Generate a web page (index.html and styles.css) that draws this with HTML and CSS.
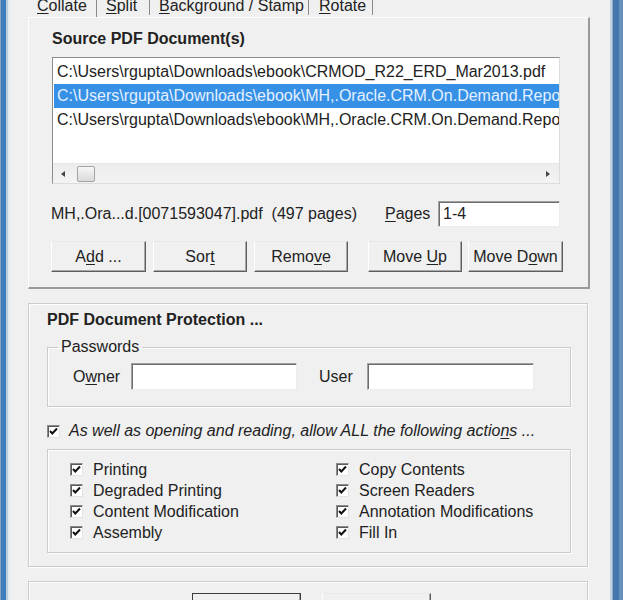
FILE: index.html
```html
<!DOCTYPE html>
<html lang="en">
<head>
    <meta charset="UTF-8">
    <title>PDF Tools - Collate</title>
    <link rel="stylesheet" href="styles.css">
</head>
<body>
    <div class="window">
        <div class="frame frame-left"></div>
        <div class="client">
            <!-- Abas -->
            <div class="tabs">
                <div class="tab tab-active"><u>C</u>ollate</div>
                <div class="tab"><u>S</u>plit</div>
                <div class="tab"><u>B</u>ackground / Stamp</div>
                <div class="tab"><u>R</u>otate</div>
            </div>

            <div class="tab-panel">
                <div class="heading">Source PDF Document(s)</div>
                <div class="listbox">
                    <div class="list-rows">
                        <div class="list-item">C:\Users\rgupta\Downloads\ebook\CRMOD_R22_ERD_Mar2013.pdf</div>
                        <div class="list-item selected">C:\Users\rgupta\Downloads\ebook\MH,.Oracle.CRM.On.Demand.Repo</div>
                        <div class="list-item">C:\Users\rgupta\Downloads\ebook\MH,.Oracle.CRM.On.Demand.Repo</div>
                    </div>
                    <div class="hscroll">
                        <span class="arrow arrow-left"></span>
                        <div class="track"><span class="thumb"></span></div>
                        <span class="arrow arrow-right"></span>
                    </div>
                </div>

                <div class="info-row">
                    <span class="file-info">MH,.Ora...d.[0071593047].pdf&nbsp; (497 pages)</span>
                    <label class="pages-label" for="pages"><u>P</u>ages</label>
                    <input class="text-field pages-field" id="pages" type="text" value="1-4">
                </div>

                <div class="button-row">
                    <button class="btn btn-add">A<u>d</u>d ...</button>
                    <button class="btn btn-sort">Sor<u>t</u></button>
                    <button class="btn btn-remove">Remo<u>v</u>e</button>
                    <button class="btn btn-up">Move <u>U</u>p</button>
                    <button class="btn btn-down">Move D<u>o</u>wn</button>
                </div>
            </div>

            <!-- Protecao -->
            <div class="group protection">
                <div class="heading">PDF Document Protection ...</div>
                <fieldset class="passwords">
                    <legend>Passwords</legend>
                    <label class="pw-label owner-label">O<u>w</u>ner</label>
                    <input class="text-field owner-field" type="text">
                    <label class="pw-label user-label">User</label>
                    <input class="text-field user-field" type="text">
                </fieldset>

                <div class="check allow-all">
                    <span class="checkbox"><svg viewBox="0 0 11 11"><path d="M2 5 L4.3 7.5 L9 2.5"/></svg></span>
                    <span class="allow-text">As well as opening and reading, allow ALL the following actio<u>n</u>s ...</span>
                </div>

                <div class="actions">
                    <div class="check"><span class="checkbox"><svg viewBox="0 0 11 11"><path d="M2 5 L4.3 7.5 L9 2.5"/></svg></span>Printing</div>
                    <div class="check"><span class="checkbox"><svg viewBox="0 0 11 11"><path d="M2 5 L4.3 7.5 L9 2.5"/></svg></span>Copy Contents</div>
                    <div class="check"><span class="checkbox"><svg viewBox="0 0 11 11"><path d="M2 5 L4.3 7.5 L9 2.5"/></svg></span>Degraded Printing</div>
                    <div class="check"><span class="checkbox"><svg viewBox="0 0 11 11"><path d="M2 5 L4.3 7.5 L9 2.5"/></svg></span>Screen Readers</div>
                    <div class="check"><span class="checkbox"><svg viewBox="0 0 11 11"><path d="M2 5 L4.3 7.5 L9 2.5"/></svg></span>Content Modification</div>
                    <div class="check"><span class="checkbox"><svg viewBox="0 0 11 11"><path d="M2 5 L4.3 7.5 L9 2.5"/></svg></span>Annotation Modifications</div>
                    <div class="check"><span class="checkbox"><svg viewBox="0 0 11 11"><path d="M2 5 L4.3 7.5 L9 2.5"/></svg></span>Assembly</div>
                    <div class="check"><span class="checkbox"><svg viewBox="0 0 11 11"><path d="M2 5 L4.3 7.5 L9 2.5"/></svg></span>Fill In</div>
                </div>
            </div>

            <!-- Rodape (botoes cortados na borda inferior) -->
            <div class="group footer">
                <button class="btn btn-default" aria-label="OK"></button>
                <button class="btn btn-footer" aria-label="Cancel"></button>
            </div>
        </div>
        <div class="frame frame-right"></div>
    </div>
</body>
</html>
```

FILE: styles.css
```css
/* Reset */
* {
    margin: 0;
    padding: 0;
    box-sizing: border-box;
}

html, body {
    height: 100%;
    overflow: hidden;
}

body {
    font-family: 'Liberation Sans', Arial, sans-serif;
    font-size: 16px;
    line-height: 18px;
    color: #222;
    background: #f0f0f0;
}

u {
    text-decoration: underline;
    text-underline-offset: 2px;
}

/* Janela */
.window {
    display: flex;
    height: 100%;
}

.frame-left {
    width: 10px;
    background: linear-gradient(to right, #8aa2bc 0 1px, #3d7bbd 1px 6px, #b9cde0 6px 8px, #e4e9ee 8px 10px);
}

.frame-right {
    width: 13px;
    background: linear-gradient(to right, #c4d2e0 0 2px, #8fa9c6 2px 3px, #4677ac 3px 9px, #6790bd 9px 13px);
}

.client {
    width: 600px;
    padding-left: 18px;
}

/* Abas (topo cortado pela janela) */
.tabs {
    display: flex;
    align-items: flex-start;
    height: 17px;
}

.tab {
    height: 15px;
    line-height: 12px;
    padding: 0 8px 0 9px;
    border-right: 1px solid #8a8a8a;
    white-space: nowrap;
}

.tab-active {
    height: 17px;
    width: 69px;
}

.tab:nth-child(2) { width: 53px; }
.tab:nth-child(3) { width: 159px; }
.tab:nth-child(4) { width: 64px; padding-left: 10px; }

.tab-panel {
    width: 562px;
    border-top: 1px solid #fdfdfd;
    border-left: 1px solid #fdfdfd;
    border-right: 2px solid #9a9a9a;
    border-bottom: 2px solid #9a9a9a;
    padding: 12px 0 15px 23px;
}

.heading {
    font-weight: bold;
}

/* Lista */
.listbox {
    margin-top: 9px;
    width: 508px;
    height: 127px;
    background: #fff;
    border: 1px solid #8d8d8d;
    border-right-color: #dcdcdc;
    border-bottom-color: #dcdcdc;
    overflow: hidden;
}

.list-rows {
    height: 105px;
    padding-top: 2px;
}

.list-item {
    height: 24px;
    line-height: 24px;
    margin-left: 1px;
    padding-left: 3px;
    white-space: nowrap;
}

.list-item.selected {
    background: #3690e6;
    color: #e4f0ff;
}

.hscroll {
    display: flex;
    align-items: center;
    height: 20px;
    background: linear-gradient(#ececec, #f4f4f4);
    border-top: 1px solid #e6e6e6;
}

.arrow {
    width: 0;
    height: 0;
    border-top: 3px solid transparent;
    border-bottom: 3px solid transparent;
}

.arrow-left {
    margin-left: 8px;
    border-right: 4px solid #444;
}

.arrow-right {
    margin-right: 9px;
    border-left: 4px solid #444;
}

.track {
    flex: 1;
    padding-left: 12px;
}

.thumb {
    display: block;
    width: 18px;
    height: 16px;
    border: 1px solid #a3a3a3;
    border-radius: 2px;
    background: linear-gradient(#f6f6f6, #dadada);
}

/* Linha de informacao */
.info-row {
    display: flex;
    align-items: center;
    margin-top: 17px;
    height: 26px;
}

.file-info {
    margin-left: -1px;
    width: 334px;
    white-space: nowrap;
}

.pages-label {
    width: 53px;
}

.text-field {
    font: inherit;
    color: inherit;
    height: 27px;
    background: #fff;
    border: 1px solid #a0a0a0;
    border-right-color: #ececec;
    border-bottom-color: #ececec;
    box-shadow: inset 1px 1px #6d6d6d;
    padding: 0 4px;
    outline: none;
}

.pages-field {
    width: 122px;
    height: 26px;
}

/* Botoes */
.button-row {
    display: flex;
    margin-top: 14px;
    margin-left: -1px;
}

.btn {
    font: inherit;
    color: inherit;
    height: 31px;
    width: 94px;
    background: #f0f0f0;
    border: 1px solid #d6d6d6;
    border-left-color: #fff;
    border-top-color: #e8e8e8;
    border-right-color: #5e5e5e;
    border-bottom-color: #5e5e5e;
    box-shadow: inset -1px -1px #a8a8a8;
    padding-top: 1px;
}

.btn-add { width: 95px; }
.btn-sort { margin-left: 7px; }
.btn-remove { margin-left: 7px; }
.btn-up { margin-left: 20px; }
.btn-down { margin-left: 6px; width: 95px; }

/* Grupos */
.group {
    width: 560px;
    border: 1px solid #cbcbcb;
    box-shadow: inset 1px 1px #fdfdfd, 1px 1px #fdfdfd;
}

.protection {
    margin-top: 14px;
    padding: 7px 16px 13px 18px;
}

.passwords {
    margin-top: 9px;
    border: 1px solid #cbcbcb;
    box-shadow: inset 1px 1px #fdfdfd, 1px 1px #fdfdfd;
    padding: 7px 10px 16px 10px;
    display: flex;
    align-items: center;
}

.passwords legend {
    padding: 0 3px;
    margin-left: 0;
}

.pw-label {
    white-space: nowrap;
}

.owner-label {
    margin-left: 15px;
    width: 58px;
}

.owner-field {
    width: 166px;
}

.user-label {
    margin-left: 22px;
    width: 48px;
}

.user-field {
    width: 167px;
}

/* Caixas de selecao */
.check {
    display: flex;
    align-items: center;
    height: 21px;
    white-space: nowrap;
}

.checkbox {
    display: inline-block;
    width: 13px;
    height: 13px;
    margin-right: 10px;
    background: #fff;
    border: 1px solid #8a8a8a;
    border-right-color: #e4e4e4;
    border-bottom-color: #e4e4e4;
    box-shadow: inset 1px 1px #5a5a5a;
}

.checkbox svg {
    display: block;
    width: 11px;
    height: 11px;
}

.checkbox path {
    fill: none;
    stroke: #111;
    stroke-width: 2;
}

.allow-all {
    margin-top: 15px;
    height: 18px;
}

.allow-all .checkbox {
    margin-right: 9px;
}

.allow-text {
    font-style: italic;
}

.actions {
    margin-top: 9px;
    border: 1px solid #cbcbcb;
    box-shadow: inset 1px 1px #fdfdfd, 1px 1px #fdfdfd;
    padding: 9px 0 9px 22px;
    display: grid;
    grid-template-columns: 266px 1fr;
}

/* Rodape */
.footer {
    margin-top: 14px;
    height: 40px;
    padding-top: 11px;
    display: flex;
    justify-content: center;
    gap: 21px;
    padding-left: 7px;
}

.footer .btn {
    width: 109px;
}

.btn-default {
    border: 1px solid #3c3c3c;
}
```
